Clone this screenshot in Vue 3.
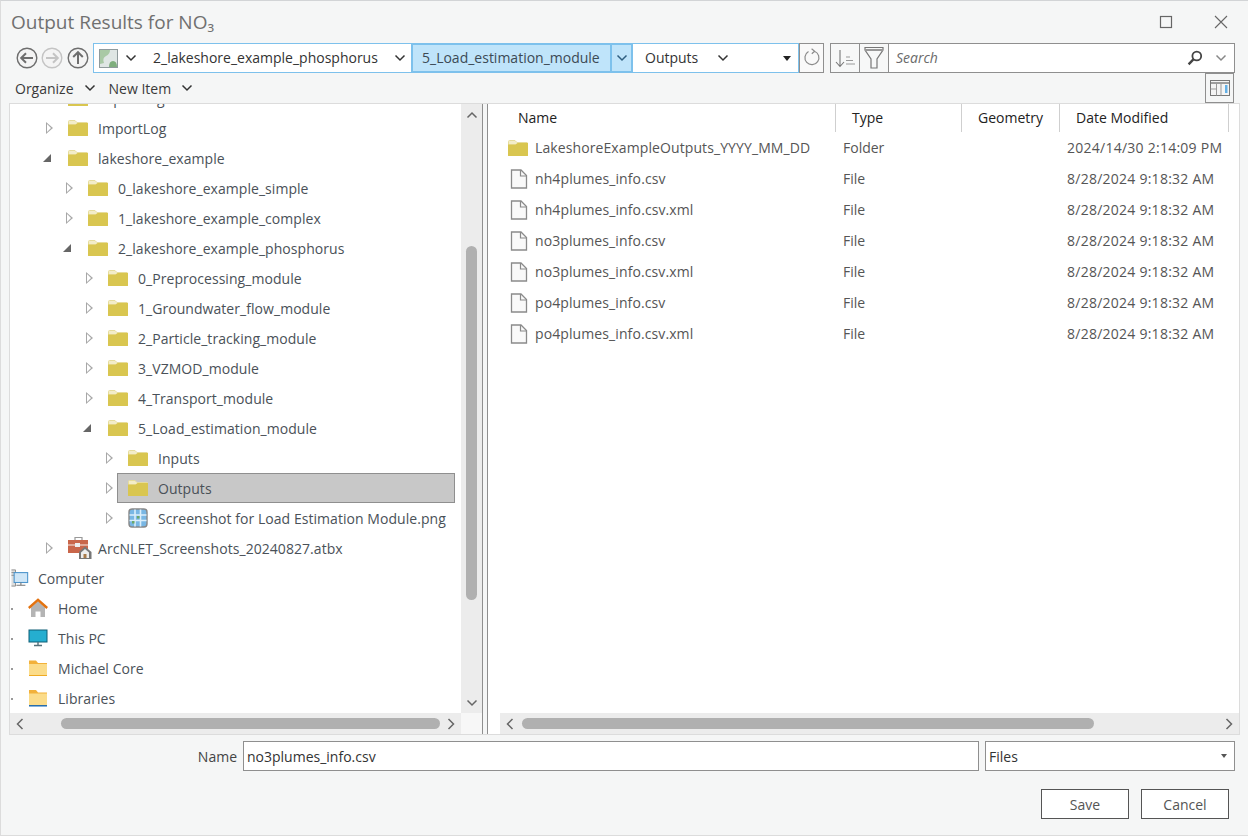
<template>
  <div class="dialog">
    <!-- hidden icon sheet -->
    <svg class="icon-sheet" aria-hidden="true">
      <symbol id="folder" viewBox="0 0 20 16">
        <path d="M0.5 3V1.5Q0.5 0.5 1.5 0.5H7L9 2.5H19Q19.5 2.5 19.5 3.5V5H0.5Z" fill="#f3edc8" stroke="#e6dc9c" />
        <path d="M0 4.5H7.5L9.5 3H20V15.5Q20 16 19.5 16H0.5Q0 16 0 15.5Z" fill="#d9c650" />
      </symbol>
      <symbol id="file" viewBox="0 0 18 20">
        <path d="M1.5 1H11L16.5 6.5V19H1.5Z" fill="#f9f9f9" stroke="#8a8a8a" stroke-width="1.3" />
        <path d="M10.5 1V7H16.5" fill="none" stroke="#8a8a8a" stroke-width="1.2" />
      </symbol>
      <symbol id="chev" viewBox="0 0 12 8">
        <path d="M1.5 1.5L6 6L10.5 1.5" fill="none" stroke="currentColor" stroke-width="1.5" />
      </symbol>
    </svg>

    <header class="titlebar">
      <h1>Output Results for NO₃</h1>
      <div class="window-buttons">
        <svg width="14" height="14" viewBox="0 0 14 14"><rect x="1.5" y="1.5" width="11" height="11" fill="none" stroke="#666" stroke-width="1.2" /></svg>
        <svg width="14" height="14" viewBox="0 0 14 14"><path d="M1 1L13 13M13 1L1 13" stroke="#666" stroke-width="1.1" /></svg>
      </div>
    </header>

    <div class="navbar">
      <div class="nav-arrows">
        <svg width="22" height="22" viewBox="0 0 22 22"><circle cx="11" cy="11" r="9.8" fill="#f4f4f4" stroke="#6e6e6e" stroke-width="1.4" /><path d="M17 11H5.5M10 6.2L5.2 11L10 15.8" fill="none" stroke="#6e6e6e" stroke-width="2" /></svg>
        <svg width="22" height="22" viewBox="0 0 22 22"><circle cx="11" cy="11" r="9.8" fill="#f4f4f4" stroke="#c4c4c4" stroke-width="1.4" /><path d="M5 11H16.5M12 6.2L16.8 11L12 15.8" fill="none" stroke="#c4c4c4" stroke-width="2" /></svg>
        <svg class="up-arrow" width="22" height="22" viewBox="0 0 22 22"><circle cx="11" cy="11" r="9.8" fill="#f4f4f4" stroke="#6e6e6e" stroke-width="1.4" /><path d="M11 17V5.5M6.2 10L11 5.2L15.8 10" fill="none" stroke="#6e6e6e" stroke-width="2" /></svg>
      </div>

      <div class="breadcrumb">
        <div class="crumb-root">
          <svg width="19" height="19" viewBox="0 0 19 19">
            <rect x="0.5" y="0.5" width="18" height="18" fill="#dfe6e4" stroke="#8f9a9c" />
            <path d="M1 1H11Q11 5 7 7T5 14L1 15Z" fill="#a9c9a5" />
            <path d="M10 18Q10 12 14 12T18 18Z" fill="#7fae7d" />
          </svg>
          <svg class="chev" width="12" height="8"><use href="#chev" /></svg>
        </div>
        <div class="crumb first">
          <span>2_lakeshore_example_phosphorus</span>
          <svg class="chev" width="12" height="8"><use href="#chev" /></svg>
        </div>
        <div class="crumb active"><span>5_Load_estimation_module</span></div>
        <div class="crumb-split"><svg class="chev" width="12" height="8"><use href="#chev" /></svg></div>
        <div class="crumb last">
          <span>Outputs</span>
          <svg class="chev" width="12" height="8"><use href="#chev" /></svg>
        </div>
        <i class="caret black"></i>
      </div>

      <button class="tool-btn refresh" aria-label="Refresh">
        <svg width="20" height="20" viewBox="0 0 20 20"><path d="M12.5 3.2A7 7 0 1 1 6.5 3.6M9.6 0.8L12.6 3.2L9.8 5.8" fill="none" stroke="#8a8a8a" stroke-width="1.2" /></svg>
      </button>

      <div class="search-group">
        <button class="search-tool" aria-label="Sort">
          <svg width="22" height="20" viewBox="0 0 22 20"><path d="M6 2V18M2 14L6 18.5L10 14" fill="none" stroke="#777" stroke-width="1.1" /><path d="M12 9H16M12 12.5H19M12 16H21" stroke="#999" stroke-width="1.1" /></svg>
        </button>
        <button class="search-tool" aria-label="Filter">
          <svg width="20" height="24" viewBox="0 0 20 24"><path d="M1 1.5H19V4L13 13V22H7V13L1 4Z" fill="none" stroke="#777" stroke-width="1.2" /><path d="M1 4H19" stroke="#999" stroke-width="2" /></svg>
        </button>
        <div class="search-input">
          <em>Search</em>
          <svg class="magnifier" width="16" height="16" viewBox="0 0 16 16"><circle cx="9.8" cy="6" r="4.4" fill="none" stroke="#444" stroke-width="1.8" /><path d="M6.6 9.2L1.6 14.4" stroke="#444" stroke-width="2.4" /></svg>
          <svg class="chev light" width="12" height="8"><use href="#chev" /></svg>
        </div>
      </div>
    </div>

    <div class="toolbar">
      <button class="menu-btn">Organize <svg class="chev" width="12" height="8"><use href="#chev" /></svg></button>
      <button class="menu-btn">New Item <svg class="chev" width="12" height="8"><use href="#chev" /></svg></button>
      <button class="layout-btn" aria-label="Layout">
        <svg width="20" height="16" viewBox="0 0 20 16">
          <rect x="0.5" y="0.5" width="19" height="15" fill="#f4f4f4" stroke="#777" />
          <path d="M0.5 3H19.5" stroke="#777" stroke-width="1.4" />
          <path d="M6.5 3V15.5M11 3V15.5M0.5 9H6.5" stroke="#999" />
          <rect x="15" y="5" width="2.5" height="8" fill="#63b0e6" />
        </svg>
      </button>
    </div>

    <main class="panes">
      <section class="tree-pane">
        <div class="tree-wrap">
          <div class="tree-view">
            <ul class="tree">
              <li v-for="node in treeNodes" :key="node.name" class="tree-row" :style="{ paddingLeft: node.level * 20 + 'px' }">
                <span class="twisty" :class="node.twisty"></span>
                <span class="tree-label" :class="{ selected: node.selected }">
                  <svg v-if="node.icon === 'folder'" class="node-icon" width="20" height="16"><use href="#folder" /></svg>

                  <svg v-else-if="node.icon === 'image'" class="node-icon" width="20" height="20" viewBox="0 0 20 20">
                    <rect x="1" y="1" width="18" height="18" rx="3" fill="#79b7e4" stroke="#888" stroke-width="1.4" />
                    <path d="M1.5 7H18.5M1.5 12.5H18.5M7 1.5V18.5M12.5 1.5V18.5" stroke="#dbeefa" stroke-width="1.6" />
                    <rect x="4" y="13" width="2.5" height="2.5" fill="#6aa869" />
                    <rect x="9" y="8" width="2.5" height="2.5" fill="#6aa869" />
                  </svg>

                  <svg v-else-if="node.icon === 'toolbox'" class="node-icon toolbox" width="24" height="24" viewBox="0 0 24 24">
                    <path d="M7 5V1.5H14V5" fill="none" stroke="#999" stroke-width="1.2" />
                    <rect x="0" y="4" width="20" height="13" fill="#c9664a" />
                    <path d="M0 9H20" stroke="#f0d8d0" stroke-width="1.2" />
                    <rect x="7" y="7" width="5" height="4" fill="#eee" />
                    <path d="M11 16L17 10.5L23.5 16V23H11Z" fill="#777" />
                    <path d="M13 16.5L17 13L21 16.5V22H13Z" fill="#eee" />
                    <rect x="15.5" y="18" width="3" height="4" fill="#a87b4a" />
                  </svg>

                  <svg v-else-if="node.icon === 'computer'" class="node-icon computer" width="18" height="18" viewBox="0 0 20 20">
                    <path d="M0.5 1H5V19H0.5M0.5 4H5M0.5 7H5" fill="#ddd" stroke="#888" />
                    <rect x="3.5" y="4" width="15" height="11" fill="#cfe6f7" stroke="#4d95cc" stroke-width="1.2" />
                    <path d="M6 18H16M11 15V18" stroke="#777" stroke-width="1.2" />
                  </svg>

                  <svg v-else-if="node.icon === 'home'" class="node-icon" width="20" height="20" viewBox="0 0 20 20">
                    <path d="M3 9.5L10 3L17 9.5V19H12.5V13.5H7.5V19H3Z" fill="#b4b4b4" />
                    <path d="M0.8 10L10 1.8L19.2 10" fill="none" stroke="#e3720f" stroke-width="2.4" />
                  </svg>

                  <svg v-else-if="node.icon === 'pc'" class="node-icon" width="20" height="20" viewBox="0 0 20 20">
                    <rect x="1" y="2" width="18" height="12" fill="#25aed0" stroke="#0f5e76" />
                    <path d="M6 17.5H14M10 14V17.5" stroke="#55707a" stroke-width="1.4" />
                  </svg>

                  <svg v-else-if="node.icon === 'userfolder'" class="node-icon" width="20" height="18" viewBox="0 0 20 18">
                    <path d="M1 1.5H8L10 4H19V17H1Z" fill="#f2b13a" />
                    <path d="M1 5H19V17H1Z" fill="#fbdc8a" />
                    <path d="M1 16.5H19" stroke="#efab24" />
                  </svg>

                  <svg v-else class="node-icon" width="20" height="18" viewBox="0 0 20 18">
                    <path d="M1 1H8L10 3.5H19V17H1Z" fill="#f2b13a" />
                    <path d="M1 4.5H19V16H1Z" fill="#fbdc8a" />
                    <path d="M1 16.8H19" stroke="#1267b8" stroke-width="1.4" />
                  </svg>

                  <span class="node-name">{{ node.name }}</span>
                </span>
              </li>
            </ul>
          </div>

          <div class="vscroll">
            <svg class="chev flip" width="12" height="8"><use href="#chev" /></svg>
            <div class="vtrack"><div class="vthumb"></div></div>
            <svg class="chev" width="12" height="8"><use href="#chev" /></svg>
          </div>
        </div>

        <div class="hbar-row">
          <div class="hscroll left-bar">
            <svg class="side" width="8" height="12" viewBox="0 0 8 12"><path d="M6.5 1L1.5 6L6.5 11" fill="none" stroke="#666" stroke-width="1.5" /></svg>
            <div class="htrack"><div class="hthumb"></div></div>
            <svg class="side" width="8" height="12" viewBox="0 0 8 12"><path d="M1.5 1L6.5 6L1.5 11" fill="none" stroke="#666" stroke-width="1.5" /></svg>
          </div>
          <div class="corner"></div>
        </div>
      </section>

      <div class="splitter"></div>

      <section class="list-pane">
        <div class="list-head">
          <div class="col col-name">Name</div>
          <div class="col col-type">Type</div>
          <div class="col col-geo">Geometry</div>
          <div class="col col-date">Date Modified</div>
        </div>

        <div class="list-body">
          <div v-for="item in files" :key="item.name" class="file-row">
            <svg v-if="item.type === 'Folder'" class="file-icon folder" width="20" height="16"><use href="#folder" /></svg>
            <svg v-else class="file-icon" width="18" height="20"><use href="#file" /></svg>
            <span class="file-name">{{ item.name }}</span>
            <span class="file-type">{{ item.type }}</span>
            <span class="file-date">{{ item.date }}</span>
          </div>
        </div>

        <div class="hscroll right-bar">
          <svg class="side" width="8" height="12" viewBox="0 0 8 12"><path d="M6.5 1L1.5 6L6.5 11" fill="none" stroke="#666" stroke-width="1.5" /></svg>
          <div class="htrack"><div class="hthumb"></div></div>
          <svg class="side" width="8" height="12" viewBox="0 0 8 12"><path d="M1.5 1L6.5 6L1.5 11" fill="none" stroke="#666" stroke-width="1.5" /></svg>
        </div>
      </section>
    </main>

    <div class="name-row">
      <label>Name</label>
      <div class="name-input">no3plumes_info.csv</div>
      <div class="type-select">Files <i class="caret small"></i></div>
    </div>

    <footer class="actions">
      <button>Save</button>
      <button>Cancel</button>
    </footer>
  </div>
</template>

<script setup>
// level 0 = Computer and the shell folders, the project tree starts at level 2
const treeNodes = [
  { name: 'ExportLog', level: 2, twisty: 'closed', icon: 'folder' },
  { name: 'ImportLog', level: 2, twisty: 'closed', icon: 'folder' },
  { name: 'lakeshore_example', level: 2, twisty: 'open', icon: 'folder' },
  { name: '0_lakeshore_example_simple', level: 3, twisty: 'closed', icon: 'folder' },
  { name: '1_lakeshore_example_complex', level: 3, twisty: 'closed', icon: 'folder' },
  { name: '2_lakeshore_example_phosphorus', level: 3, twisty: 'open', icon: 'folder' },
  { name: '0_Preprocessing_module', level: 4, twisty: 'closed', icon: 'folder' },
  { name: '1_Groundwater_flow_module', level: 4, twisty: 'closed', icon: 'folder' },
  { name: '2_Particle_tracking_module', level: 4, twisty: 'closed', icon: 'folder' },
  { name: '3_VZMOD_module', level: 4, twisty: 'closed', icon: 'folder' },
  { name: '4_Transport_module', level: 4, twisty: 'closed', icon: 'folder' },
  { name: '5_Load_estimation_module', level: 4, twisty: 'open', icon: 'folder' },
  { name: 'Inputs', level: 5, twisty: 'closed', icon: 'folder' },
  { name: 'Outputs', level: 5, twisty: 'closed', icon: 'folder', selected: true },
  { name: 'Screenshot for Load Estimation Module.png', level: 5, twisty: 'closed', icon: 'image' },
  { name: 'ArcNLET_Screenshots_20240827.atbx', level: 2, twisty: 'closed', icon: 'toolbox' },
  { name: 'Computer', level: 0, twisty: 'none', icon: 'computer' },
  { name: 'Home', level: 0, twisty: 'dot', icon: 'home' },
  { name: 'This PC', level: 0, twisty: 'dot', icon: 'pc' },
  { name: 'Michael Core', level: 0, twisty: 'dot', icon: 'userfolder' },
  { name: 'Libraries', level: 0, twisty: 'dot', icon: 'library' },
]

const files = [
  { name: 'LakeshoreExampleOutputs_YYYY_MM_DD', type: 'Folder', date: '2024/14/30 2:14:09 PM' },
  { name: 'nh4plumes_info.csv', type: 'File', date: '8/28/2024 9:18:32 AM' },
  { name: 'nh4plumes_info.csv.xml', type: 'File', date: '8/28/2024 9:18:32 AM' },
  { name: 'no3plumes_info.csv', type: 'File', date: '8/28/2024 9:18:32 AM' },
  { name: 'no3plumes_info.csv.xml', type: 'File', date: '8/28/2024 9:18:32 AM' },
  { name: 'po4plumes_info.csv', type: 'File', date: '8/28/2024 9:18:32 AM' },
  { name: 'po4plumes_info.csv.xml', type: 'File', date: '8/28/2024 9:18:32 AM' },
]
</script>

<style>
html,
body {
  margin: 0;
  background: #f5f6f6;
}
</style>

<style scoped>
.dialog {
  width: 1248px;
  height: 836px;
  box-sizing: border-box;
  overflow: hidden;
  display: flex;
  flex-direction: column;

  border-top: 1px solid #d2d4d6;
  border-left: 1px solid #dcdcdc;
  border-bottom: 1px solid #dcdcdc;
  background: #f5f6f6;
  color: #444;

  font-family: "Open Sans", "Noto Sans", sans-serif;
  font-size: 14px;
}

.icon-sheet {
  position: absolute;
  width: 0;
  height: 0;
}

button {
  font: inherit;
  color: inherit;
  background: none;
  border: none;
  padding: 0;
}

.chev {
  color: #333;
  flex-shrink: 0;
}

.chev.light {
  color: #888;
}

.chev.flip {
  transform: rotate(180deg);
}

/* title */
.titlebar {
  height: 42px;
  flex-shrink: 0;
  display: flex;
  align-items: center;
  justify-content: space-between;
  padding: 0 20px 0 10px;
}

.titlebar h1 {
  margin: 0;
  color: #707070;
  font-size: 19px;
  font-weight: 400;
}

.window-buttons {
  display: flex;
  gap: 41px;
}

/* nav */
.navbar {
  height: 30px;
  flex-shrink: 0;
  display: flex;
  padding-left: 15px;
}

.nav-arrows {
  width: 77px;
  display: flex;
  align-items: center;
  gap: 3px;
}

.up-arrow {
  margin-left: 1px;
}

.breadcrumb {
  width: 706px;
  box-sizing: border-box;
  display: flex;
  align-items: stretch;
  background: white;
  border: 1px solid #7dc1ec;
  color: #333;
}

.breadcrumb span,
.search-input em {
  margin-top: -1px;
}

.crumb-root {
  width: 51px;
  display: flex;
  align-items: center;
  gap: 7px;
  padding-left: 5px;
  box-sizing: border-box;
}

.crumb {
  display: flex;
  align-items: center;
}

.crumb.first {
  width: 266px;
  padding-left: 8px;
  box-sizing: border-box;
  gap: 16px;
}

.crumb.active {
  width: 201px;
  padding-left: 9px;
  box-sizing: border-box;
  margin: -1px 0;
  background: #bfe4fa;
  border: 2px solid #7dc1ec;
  color: #3c4a55;
}

.crumb-split {
  width: 21px;
  margin: -1px 0;
  box-sizing: border-box;
  display: flex;
  align-items: center;
  justify-content: center;
  background: #bfe4fa;
  border: 2px solid #7dc1ec;
  border-left: none;
}

.crumb-split .chev {
  color: #2f5f80;
}

.crumb.last {
  width: 150px;
  padding-left: 12px;
  box-sizing: border-box;
  gap: 19px;
}

.caret {
  display: block;
  width: 0;
  height: 0;
  border-left: 4px solid transparent;
  border-right: 4px solid transparent;
  border-top: 5px solid #222;
}

.caret.black {
  align-self: center;
}

.tool-btn.refresh {
  width: 25px;
  box-sizing: border-box;
  border: 1px solid #8f8f8f;
  display: flex;
  align-items: center;
  justify-content: center;
  background: #f9f9f9;
}

.search-group {
  width: 405px;
  margin-left: 6px;
  box-sizing: border-box;
  display: flex;
  border: 1px solid #8f8f8f;
  background: white;
}

.search-tool {
  width: 29px;
  border-right: 1px solid #8f8f8f;
  background: #f7f8f8;
  display: flex;
  align-items: center;
  justify-content: center;
}

.search-input {
  flex: 1;
  display: flex;
  align-items: center;
  padding: 0 7px 0 7px;
}

.search-input em {
  flex: 1;
  color: #6a6a6a;
}

.magnifier {
  margin-right: 12px;
}

/* toolbar */
.toolbar {
  height: 30px;
  flex-shrink: 0;
  display: flex;
  align-items: center;
  padding-left: 14px;
  gap: 13px;
}

.menu-btn {
  display: flex;
  align-items: center;
  gap: 10px;
  color: #3a3a3a;
}

.layout-btn {
  margin-left: auto;
  margin-right: 14px;
  width: 29px;
  height: 30px;
  box-sizing: border-box;
  border: 1px solid #8f8f8f;
  display: flex;
  align-items: center;
  justify-content: center;
}

/* panes */
.panes {
  margin-left: 8px;
  width: 1231px;
  height: 632px;
  flex-shrink: 0;
  display: flex;
  box-sizing: border-box;
  border: 1px solid #dcdcdc;
  background: white;
}

.tree-pane {
  width: 472px;
  flex-shrink: 0;
  display: flex;
  flex-direction: column;
  min-height: 0;
}

.tree-wrap {
  flex: 1;
  min-height: 0;
  display: flex;
}

.tree-view {
  flex: 1;
  min-width: 0;
  overflow: hidden;
}

.tree {
  list-style: none;
  margin: -21px 0 0;
  padding: 0;
}

.tree-row {
  height: 30px;
  display: flex;
  align-items: center;
}

.twisty {
  width: 17px;
  height: 30px;
  flex-shrink: 0;
  display: block;
  position: relative;
}

.twisty.none {
  width: 0;
}

.twisty.closed::after {
  content: "";
  position: absolute;
  left: -4px;
  top: 9px;
  width: 0;
  height: 0;
  border-left: 7px solid #a8a8a8;
  border-top: 6px solid transparent;
  border-bottom: 6px solid transparent;
}

.twisty.closed::before {
  content: "";
  position: absolute;
  left: -3px;
  top: 11px;
  z-index: 1;
  width: 0;
  height: 0;
  border-left: 4px solid white;
  border-top: 4px solid transparent;
  border-bottom: 4px solid transparent;
}

.twisty.open::after {
  content: "";
  position: absolute;
  left: -7px;
  top: 11px;
  width: 0;
  height: 0;
  border-bottom: 8px solid #666;
  border-left: 8px solid transparent;
}

.twisty.dot::after {
  content: "";
  position: absolute;
  left: 1px;
  top: 15px;
  width: 2px;
  height: 2px;
  background: #999;
}

.tree-label {
  flex: 1;
  min-width: 0;
  height: 30px;
  box-sizing: border-box;
  display: flex;
  align-items: center;
  padding-left: 1px;
  gap: 10px;
  margin-right: 6px;
  white-space: nowrap;
}

.tree-label.selected {
  background: #c8c8c8;
  border: 1px solid #8f8f8f;
  margin-left: -10px;
  padding-left: 10px;
}

.node-icon {
  flex-shrink: 0;
}

.node-icon.toolbox {
  margin-right: -4px;
}

.node-icon.computer {
  margin-right: -1px;
}

.node-name {
  color: #4a5158;
  letter-spacing: 0.05px;
}

.vscroll {
  width: 21px;
  flex-shrink: 0;
  background: #ececec;
  display: flex;
  flex-direction: column;
  align-items: center;
  padding: 7px 0 6px;
  box-sizing: border-box;
  gap: 5px;
}

.vscroll .chev {
  color: #666;
}

.vtrack {
  flex: 1;
  width: 100%;
  padding-top: 122px;
  box-sizing: border-box;
}

.vthumb {
  margin: 0 auto;
  width: 11px;
  height: 354px;
  border-radius: 6px;
  background: #b0b0b0;
}

.hbar-row {
  display: flex;
  height: 21px;
  flex-shrink: 0;
}

.hscroll {
  display: flex;
  align-items: center;
  background: #ececec;
  height: 21px;
  flex-shrink: 0;
  padding: 0 6px;
  box-sizing: border-box;
}

.left-bar {
  flex: 1;
}

.htrack {
  flex: 1;
  padding: 0 8px;
}

.hthumb {
  height: 11px;
  border-radius: 6px;
  background: #b0b0b0;
}

.left-bar .htrack {
  padding: 0 7px 0 37px;
}

.right-bar .htrack {
  padding: 0 131px 0 8px;
}

.side {
  flex-shrink: 0;
}

.corner {
  width: 21px;
  background: #f7f7f7;
}

.splitter {
  width: 6px;
  flex-shrink: 0;
  box-sizing: border-box;
  background: #f5f6f6;
  border-left: 1px solid #8f8f8f;
  border-right: 1px solid #8f8f8f;
}

.list-pane {
  flex: 1;
  min-width: 0;
  display: flex;
  flex-direction: column;
  padding-left: 12px;
}

.list-head {
  height: 28px;
  flex-shrink: 0;
  display: flex;
  color: #222;
}

.col {
  box-sizing: border-box;
  display: flex;
  align-items: center;
  border-right: 1px solid #cfcfcf;
  padding: 0 0 2px 16px;
  height: 28px;
}

.col-name {
  width: 336px;
  padding-left: 18px;
}

.col-type {
  width: 126px;
}

.col-geo {
  width: 98px;
}

.col-date {
  width: 169px;
}

.list-body {
  flex: 1;
}

.file-row {
  height: 31px;
  display: flex;
  align-items: center;
  color: #555;
}

.file-icon {
  flex-shrink: 0;
  margin: 0 7px 0 10px;
}

.file-icon.folder {
  margin: 0 7px 0 8px;
}

.file-name {
  width: 308px;
  flex-shrink: 0;
  white-space: nowrap;
  letter-spacing: 0.1px;
}

.file-type {
  width: 224px;
  flex-shrink: 0;
}

.file-date {
  white-space: nowrap;
  letter-spacing: 0.25px;
}

/* bottom */
.name-row {
  height: 30px;
  margin-top: 6px;
  flex-shrink: 0;
  display: flex;
  align-items: stretch;
  padding-right: 13px;
}

.name-row label {
  width: 236px;
  text-align: right;
  align-self: center;
  color: #444;
}

.name-input,
.type-select {
  box-sizing: border-box;
  background: white;
  border: 1px solid #8f8f8f;
  display: flex;
  align-items: center;
  padding-left: 3px;
  color: #333;
}

.name-input {
  width: 736px;
  margin-left: 6px;
}

.type-select {
  flex: 1;
  margin-left: 6px;
  justify-content: space-between;
  padding-right: 7px;
}

.caret.small {
  border-left-width: 3px;
  border-right-width: 3px;
  border-top: 4px solid #555;
}

.actions {
  display: flex;
  justify-content: flex-end;
  gap: 12px;
  padding-right: 19px;
  margin-top: 18px;
}

.actions button {
  width: 88px;
  height: 30px;
  box-sizing: border-box;
  border: 1px solid #555;
  background: white;
  color: #555;
}
</style>
